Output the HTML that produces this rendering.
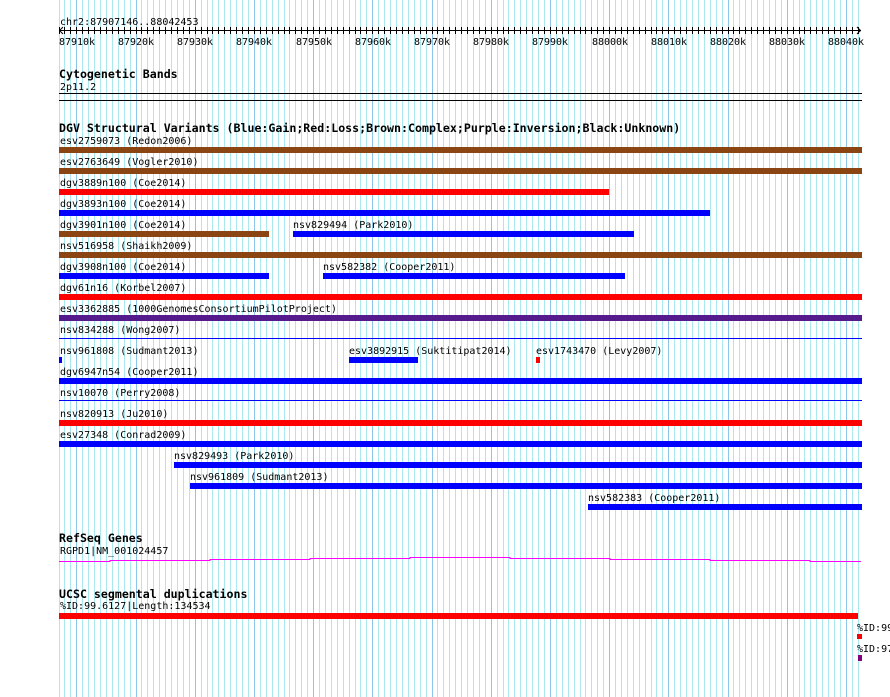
<!DOCTYPE html>
<html><head><meta charset="utf-8"><style>
html,body{margin:0;padding:0;background:#fff;}
svg{display:block;}
text{font-family:"DejaVu Sans Mono","Liberation Mono",monospace;font-size:10px;fill:#000;}
.h{font-weight:bold;font-size:11.6px;}
</style></head><body>
<svg width="890" height="697" viewBox="0 0 890 697" xmlns="http://www.w3.org/2000/svg" shape-rendering="crispEdges">
<path stroke="#aaeaee" stroke-width="1" fill="none" d="M59.5 0V697M64.5 0V697M70.5 0V697M82.5 0V697M88.5 0V697M94.5 0V697M100.5 0V697M106.5 0V697M112.5 0V697M118.5 0V697M124.5 0V697M130.5 0V697M141.5 0V697M147.5 0V697M153.5 0V697M159.5 0V697M165.5 0V697M171.5 0V697M177.5 0V697M183.5 0V697M189.5 0V697M201.5 0V697M207.5 0V697M212.5 0V697M218.5 0V697M224.5 0V697M230.5 0V697M236.5 0V697M242.5 0V697M248.5 0V697M260.5 0V697M266.5 0V697M272.5 0V697M278.5 0V697M284.5 0V697M289.5 0V697M295.5 0V697M301.5 0V697M307.5 0V697M319.5 0V697M325.5 0V697M331.5 0V697M337.5 0V697M343.5 0V697M349.5 0V697M355.5 0V697M360.5 0V697M366.5 0V697M378.5 0V697M384.5 0V697M390.5 0V697M396.5 0V697M402.5 0V697M408.5 0V697M414.5 0V697M420.5 0V697M426.5 0V697M437.5 0V697M443.5 0V697M449.5 0V697M455.5 0V697M461.5 0V697M467.5 0V697M473.5 0V697M479.5 0V697M485.5 0V697M497.5 0V697M503.5 0V697M508.5 0V697M514.5 0V697M520.5 0V697M526.5 0V697M532.5 0V697M538.5 0V697M544.5 0V697M556.5 0V697M562.5 0V697M568.5 0V697M574.5 0V697M580.5 0V697M585.5 0V697M591.5 0V697M597.5 0V697M603.5 0V697M615.5 0V697M621.5 0V697M627.5 0V697M633.5 0V697M639.5 0V697M645.5 0V697M651.5 0V697M656.5 0V697M662.5 0V697M674.5 0V697M680.5 0V697M686.5 0V697M692.5 0V697M698.5 0V697M704.5 0V697M710.5 0V697M716.5 0V697M722.5 0V697M733.5 0V697M739.5 0V697M745.5 0V697M751.5 0V697M757.5 0V697M763.5 0V697M769.5 0V697M775.5 0V697M781.5 0V697M793.5 0V697M799.5 0V697M804.5 0V697M810.5 0V697M816.5 0V697M822.5 0V697M828.5 0V697M834.5 0V697M840.5 0V697M852.5 0V697M858.5 0V697"/>
<path stroke="#8cc6ea" stroke-width="1" fill="none" d="M76.5 0V697M136.5 0V697M195.5 0V697M254.5 0V697M313.5 0V697M372.5 0V697M432.5 0V697M491.5 0V697M550.5 0V697M609.5 0V697M668.5 0V697M728.5 0V697M787.5 0V697M846.5 0V697"/>

<text x="60" y="25">chr2:87907146..88042453</text>
<rect x="59" y="30" width="802" height="1" fill="#000"/>
<path stroke="#000" stroke-width="1" fill="none" d="M59.5 27V34M64.5 27V34M70.5 27V34M76.5 27V34M82.5 27V34M88.5 27V34M94.5 27V34M100.5 27V34M106.5 27V34M112.5 27V34M118.5 27V34M124.5 27V34M130.5 27V34M136.5 27V34M141.5 27V34M147.5 27V34M153.5 27V34M159.5 27V34M165.5 27V34M171.5 27V34M177.5 27V34M183.5 27V34M189.5 27V34M195.5 27V34M201.5 27V34M207.5 27V34M212.5 27V34M218.5 27V34M224.5 27V34M230.5 27V34M236.5 27V34M242.5 27V34M248.5 27V34M254.5 27V34M260.5 27V34M266.5 27V34M272.5 27V34M278.5 27V34M284.5 27V34M289.5 27V34M295.5 27V34M301.5 27V34M307.5 27V34M313.5 27V34M319.5 27V34M325.5 27V34M331.5 27V34M337.5 27V34M343.5 27V34M349.5 27V34M355.5 27V34M360.5 27V34M366.5 27V34M372.5 27V34M378.5 27V34M384.5 27V34M390.5 27V34M396.5 27V34M402.5 27V34M408.5 27V34M414.5 27V34M420.5 27V34M426.5 27V34M432.5 27V34M437.5 27V34M443.5 27V34M449.5 27V34M455.5 27V34M461.5 27V34M467.5 27V34M473.5 27V34M479.5 27V34M485.5 27V34M491.5 27V34M497.5 27V34M503.5 27V34M508.5 27V34M514.5 27V34M520.5 27V34M526.5 27V34M532.5 27V34M538.5 27V34M544.5 27V34M550.5 27V34M556.5 27V34M562.5 27V34M568.5 27V34M574.5 27V34M580.5 27V34M585.5 27V34M591.5 27V34M597.5 27V34M603.5 27V34M609.5 27V34M615.5 27V34M621.5 27V34M627.5 27V34M633.5 27V34M639.5 27V34M645.5 27V34M651.5 27V34M656.5 27V34M662.5 27V34M668.5 27V34M674.5 27V34M680.5 27V34M686.5 27V34M692.5 27V34M698.5 27V34M704.5 27V34M710.5 27V34M716.5 27V34M722.5 27V34M728.5 27V34M733.5 27V34M739.5 27V34M745.5 27V34M751.5 27V34M757.5 27V34M763.5 27V34M769.5 27V34M775.5 27V34M781.5 27V34M787.5 27V34M793.5 27V34M799.5 27V34M804.5 27V34M810.5 27V34M816.5 27V34M822.5 27V34M828.5 27V34M834.5 27V34M840.5 27V34M846.5 27V34M852.5 27V34M858.5 27V34"/>
<path d="M63 27 L59.5 30.5 L63 34 M857 27 L860.5 30.5 L857 34" stroke="#000" fill="none" shape-rendering="auto"/>
<g text-anchor="middle">
<text x="77" y="45">87910k</text><text x="136" y="45">87920k</text><text x="195" y="45">87930k</text><text x="254" y="45">87940k</text><text x="314" y="45">87950k</text><text x="373" y="45">87960k</text><text x="432" y="45">87970k</text><text x="491" y="45">87980k</text><text x="550" y="45">87990k</text><text x="610" y="45">88000k</text><text x="669" y="45">88010k</text><text x="728" y="45">88020k</text><text x="787" y="45">88030k</text><text x="846" y="45">88040k</text>
</g>

<text class="h" x="59" y="78">Cytogenetic Bands</text>
<text x="60" y="90">2p11.2</text>
<rect x="59" y="93" width="803" height="1" fill="#000"/>
<rect x="59" y="100" width="803" height="1" fill="#000"/>

<text class="h" x="59" y="132">DGV Structural Variants (Blue:Gain;Red:Loss;Brown:Complex;Purple:Inversion;Black:Unknown)</text>

<text x="60" y="144">esv2759073 (Redon2006)</text>
<rect x="59" y="147" width="803" height="6" fill="#8b4513"/>
<text x="60" y="165">esv2763649 (Vogler2010)</text>
<rect x="59" y="168" width="803" height="6" fill="#8b4513"/>
<text x="60" y="186">dgv3889n100 (Coe2014)</text>
<rect x="59" y="189" width="550" height="6" fill="#ff0000"/>
<text x="60" y="207">dgv3893n100 (Coe2014)</text>
<rect x="59" y="210" width="651" height="6" fill="#0000ff"/>
<text x="60" y="228">dgv3901n100 (Coe2014)</text>
<rect x="59" y="231" width="210" height="6" fill="#8b4513"/>
<text x="293" y="228">nsv829494 (Park2010)</text>
<rect x="293" y="231" width="341" height="6" fill="#0000ff"/>
<text x="60" y="249">nsv516958 (Shaikh2009)</text>
<rect x="59" y="252" width="803" height="6" fill="#8b4513"/>
<text x="60" y="270">dgv3908n100 (Coe2014)</text>
<rect x="59" y="273" width="210" height="6" fill="#0000ff"/>
<text x="323" y="270">nsv582382 (Cooper2011)</text>
<rect x="323" y="273" width="302" height="6" fill="#0000ff"/>
<text x="60" y="291">dgv61n16 (Korbel2007)</text>
<rect x="59" y="294" width="803" height="6" fill="#ff0000"/>
<text x="60" y="312">esv3362885 (1000GenomesConsortiumPilotProject)</text>
<rect x="59" y="315" width="803" height="6" fill="#551a8b"/>
<text x="60" y="333">nsv834288 (Wong2007)</text>
<rect x="59" y="338" width="803" height="1" fill="#0000ff"/>
<text x="60" y="354">nsv961808 (Sudmant2013)</text>
<rect x="59" y="357" width="3" height="6" fill="#0000ff"/>
<text x="349" y="354">esv3892915 (Suktitipat2014)</text>
<rect x="349" y="357" width="69" height="6" fill="#0000ff"/>
<text x="536" y="354">esv1743470 (Levy2007)</text>
<rect x="536" y="357" width="4" height="6" fill="#ff0000"/>
<text x="60" y="375">dgv6947n54 (Cooper2011)</text>
<rect x="59" y="378" width="803" height="6" fill="#0000ff"/>
<text x="60" y="396">nsv10070 (Perry2008)</text>
<rect x="59" y="400" width="803" height="1" fill="#0000ff"/>
<text x="60" y="417">nsv820913 (Ju2010)</text>
<rect x="59" y="420" width="803" height="6" fill="#ff0000"/>
<text x="60" y="438">esv27348 (Conrad2009)</text>
<rect x="59" y="441" width="803" height="6" fill="#0000ff"/>
<text x="174" y="459">nsv829493 (Park2010)</text>
<rect x="174" y="462" width="688" height="6" fill="#0000ff"/>
<text x="190" y="480">nsv961809 (Sudmant2013)</text>
<rect x="190" y="483" width="672" height="6" fill="#0000ff"/>
<text x="588" y="501">nsv582383 (Cooper2011)</text>
<rect x="588" y="504" width="274" height="6" fill="#0000ff"/>

<text class="h" x="59" y="542">RefSeq Genes</text>
<text x="60" y="554">RGPD1|NM_001024457</text>
<path d="M59 561.5H110V560.5H210V559.5H310V558.5H410V557.5H510V558.5H610V559.5H710V560.5H810V561.5H861" stroke="#ff00ff" fill="none" stroke-width="1"/>

<text class="h" x="59" y="598">UCSC segmental duplications</text>
<text x="60" y="609">%ID:99.6127|Length:134534</text>
<rect x="59" y="613" width="799" height="6" fill="#ff0000"/>
<text x="857" y="631">%ID:99</text>
<rect x="857" y="634" width="5" height="5" fill="#ff0000"/>
<text x="857" y="652">%ID:97</text>
<rect x="858" y="655" width="4" height="6" fill="#800080"/>
</svg>
</body></html>
